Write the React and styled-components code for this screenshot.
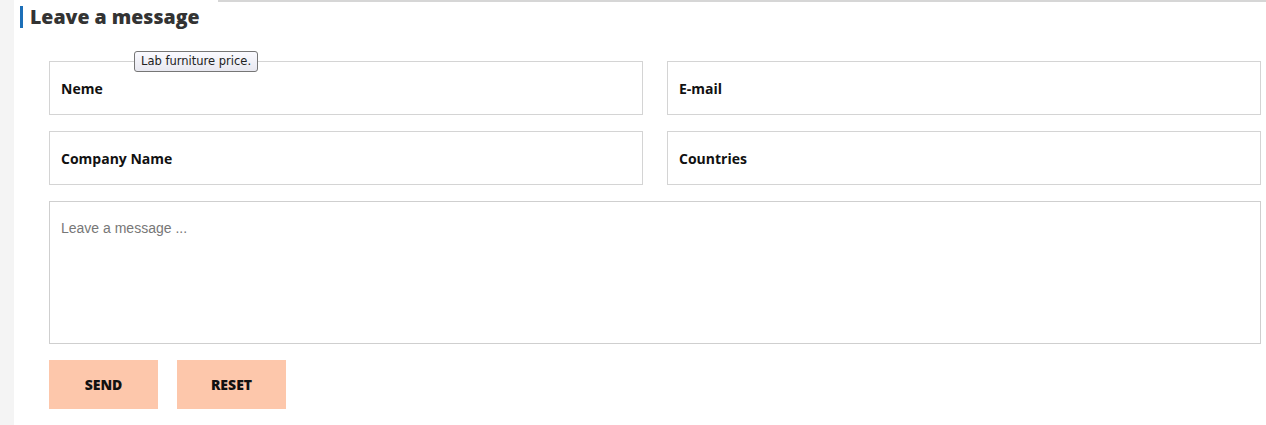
import styled, { createGlobalStyle } from "styled-components";

const Global = createGlobalStyle`
	html, body {
		margin: 0;
		padding: 0;
		background: #fff;
	}
	* {
		box-sizing: border-box;
	}
`;

const Page = styled.div`
	display: flex;
	width: 1266px;
	height: 425px;
	overflow: hidden;
`;

const Side = styled.div`
	width: 14px;
	flex-shrink: 0;
	background: #f4f4f4;
`;

const Main = styled.div`
	flex: 1;
	position: relative;
`;

const Header = styled.div`
	display: flex;
	align-items: flex-start;
`;

const Title = styled.h2`
	margin: 6px 0 0 6px;
	padding-left: 7px;
	border-left: 3px solid #1c6fb8;
	font-family: "Open Sans", Lato, sans-serif;
	font-weight: 800;
	font-size: 19.5px;
	line-height: 22px;
	color: #333;
`;

const Rule = styled.div`
	flex: 1;
	height: 2px;
	margin-left: 18px;
	background: #d6d6d6;
`;

const Form = styled.form`
	padding: 33px 5px 0 35px;
	display: flex;
	flex-direction: column;
	gap: 16px;
`;

const Row = styled.div`
	display: grid;
	grid-template-columns: 1fr 1fr;
	column-gap: 24px;
`;

const Field = styled.input`
	height: 54px;
	padding: 0 11px;
	border: 1px solid #d4d4d4;
	outline: none;
	font-family: "Open Sans", sans-serif;
	font-size: 14px;
	font-weight: 700;
	color: #111;
	&::placeholder {
		color: #111;
		font-weight: 700;
	}
`;

const Message = styled.textarea`
	height: 143px;
	padding: 18px 11px;
	border: 1px solid #cfcfcf;
	outline: none;
	resize: none;
	font-family: "Liberation Sans", Arial, sans-serif;
	font-size: 14px;
	color: #333;
	&::placeholder {
		color: #777;
	}
`;

const Buttons = styled.div`
	display: flex;
	gap: 19px;
`;

const Button = styled.button`
	width: 109px;
	height: 49px;
	border: none;
	background: #fdc7ab;
	font-family: "Open Sans", sans-serif;
	font-weight: 800;
	font-size: 14px;
	color: #111;
	cursor: pointer;
`;

const Tip = styled.div`
	position: absolute;
	left: 120px;
	top: 51px;
	height: 21px;
	padding: 0 6px;
	border: 1px solid #767676;
	border-radius: 3px;
	background: linear-gradient(#fafaff, #e8e8f0);
	font-family: "DejaVu Sans", "Noto Sans", sans-serif;
	font-size: 11.5px;
	line-height: 19px;
	color: #222;
	white-space: nowrap;
`;

const App = () => {
	return (
		<Page>
			<Global />
			<Side />
			<Main>
				<Header>
					<Title>Leave a message</Title>
					<Rule />
				</Header>
				<Form onSubmit={(e) => e.preventDefault()}>
					<Row>
						<Field placeholder="Neme" />
						<Field placeholder="E-mail" />
					</Row>
					<Row>
						<Field placeholder="Company Name" />
						<Field placeholder="Countries" />
					</Row>
					<Message placeholder="Leave a message ..." />
					<Buttons>
						<Button type="submit">SEND</Button>
						<Button type="reset">RESET</Button>
					</Buttons>
				</Form>
				<Tip>Lab furniture price.</Tip>
			</Main>
		</Page>
	);
};

export default App;
